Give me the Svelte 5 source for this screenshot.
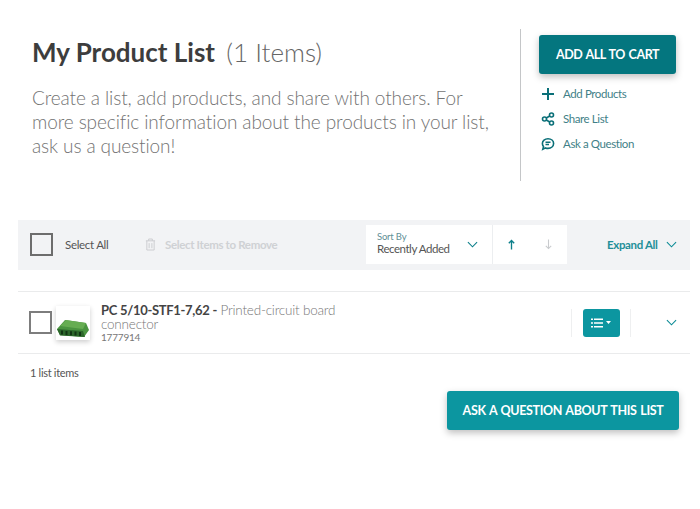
<script>
	let items = [{ code: "PC 5/10-STF1-7,62", name: "Printed-circuit board connector", sku: "1777914" }];
</script>

<div class="page">
	<header class="top">
		<div class="intro">
			<h1>My Product List <span>(1 Items)</span></h1>
			<p>Create a list, add products, and share with others. For more specific information about the products in your list, ask us a question!</p>
		</div>
		<aside class="actions">
			<button class="btn dark">ADD ALL TO CART</button>
			<ul>
				<li>
					<svg viewBox="0 0 14 14" width="14" height="14"><path d="M7 1v12M1 7h12" stroke="#0a6f78" stroke-width="2" fill="none"/></svg>
					Add Products
				</li>
				<li>
					<svg viewBox="0 0 14 14" width="14" height="14" fill="none" stroke="#0a6f78" stroke-width="1.6"><circle cx="3.5" cy="7" r="2"/><circle cx="10.500" cy="3" r="2"/><circle cx="10.500" cy="11" r="2"/><path d="M5.200 6l3.600-2M5.200 8l3.600 2"/></svg>
					Share List
				</li>
				<li>
					<svg viewBox="0 0 14 14" width="14" height="14" fill="none" stroke="#0a6f78" stroke-width="1.600"><path d="M7 1.800c3.200 0 5.600 2.100 5.600 4.800S10.200 11.400 7 11.400c-.9 0-1.700-.2-2.400-.5L1.800 12.300l.7-2.700C1.800 8.800 1.400 7.800 1.400 6.600 1.400 3.900 3.800 1.800 7 1.800z"/><path d="M4.500 5.300h5M4.500 7.500h3.500"/></svg>
					Ask a Question
				</li>
			</ul>
		</aside>
	</header>

	<section class="toolbar">
		<span class="check"></span>
		<span class="select-all">Select All</span>
		<span class="remove">
			<svg viewBox="0 0 12 14" width="11" height="13" fill="none" stroke="#c9cbce" stroke-width="1"><path d="M1 3h10M4 3V1h4v2M2 3v10h8V3M4.500 5.500v5.500M7.500 5.500v5.500"/></svg>
			Select Items to Remove
		</span>
		<div class="sort">
			<div class="sort-select">
				<div>
					<small>Sort By</small>
					<span>Recently Added</span>
				</div>
				<svg viewBox="0 0 12 7" width="11" height="7" fill="none" stroke="#0c7f8a" stroke-width="1.200"><path d="M1 1l5 5 5-5"/></svg>
			</div>
			<div class="arrow">
				<svg viewBox="0 0 10 12" width="9" height="11" fill="none" stroke="#0c7f8a" stroke-width="1.500"><path d="M5 11.500V1.500M2 4.500l3-3 3 3"/></svg>
			</div>
			<div class="arrow off">
				<svg viewBox="0 0 10 12" width="9" height="11" fill="none" stroke="#c9cbce" stroke-width="1.200"><path d="M5 .5v10M2 7.500l3 3 3-3"/></svg>
			</div>
		</div>
		<span class="expand">
			Expand All
			<svg viewBox="0 0 12 7" width="11" height="7" fill="none" stroke="#0c8b96" stroke-width="1.200"><path d="M1 1l5 5 5-5"/></svg>
		</span>
	</section>

	{#each items as item}
		<article class="row">
			<span class="check small"></span>
			<div class="thumb">
				<svg viewBox="0 0 34 34" width="34" height="34">
					<path d="M1 23 L9 14 L30 17 L33 24 L28 31 L4 29 Z" fill="#4a9440"/>
					<path d="M4 20 L10 14 L30 17 L27 23 Z" fill="#66ad52"/>
					<path d="M1 23 L27 25 L29 31 L4 29.500 Z" fill="#2c672b"/>
					<path d="M6 24.500v4M10.500 25v4M15 25.300v4M19.500 25.600v4M24 26v4" stroke="#123614" stroke-width="2"/>
				</svg>
			</div>
			<div class="info">
				<div class="desc"><b>{item.code} -</b> {item.name}</div>
				<div class="sku">{item.sku}</div>
			</div>
			<div class="menu-cell">
				<button class="menu" aria-label="Menu">
					<svg viewBox="0 0 20 10" width="20" height="10" fill="#fff"><path d="M0 .5h2v1.500H0zM3 .5h9v1.500H3zM0 4.200h2v1.500H0zM3 4.200h9v1.500H3zM0 8h2v1.500H0zM3 8h9v1.500H3zM15 3h5l-2.500 3z"/></svg>
				</button>
			</div>
			<svg class="row-chev" viewBox="0 0 12 7" width="11" height="7" fill="none" stroke="#0c8b96" stroke-width="1.200"><path d="M1 1l5 5 5-5"/></svg>
		</article>
	{/each}

	<div class="count">{items.length} list items</div>
	<div class="bottom">
		<button class="btn teal">ASK A QUESTION ABOUT THIS LIST</button>
	</div>
</div>

<style>
	:global(body) {
		margin: 0;
		background: #fff;
	}
	.page {
		width: 700px;
		height: 509px;
		overflow: hidden;
		font-family: Lato, "Noto Sans", sans-serif;
		color: #444;
		box-sizing: border-box;
		padding-top: 29px;
	}
	.top {
		display: flex;
		height: 152px;
		padding-left: 32px;
	}
	.intro {
		width: 489px;
		box-sizing: border-box;
		border-right: 1px solid #c4c6c8;
		padding-right: 20px;
	}
	h1 {
		margin: 5px 0 0;
		font-size: 26px;
		line-height: 36px;
		font-weight: 700;
		color: #3d3d3d;
	}
	h1 span {
		font-weight: 300;
		color: #666;
		margin-left: 5px;
	}
	p {
		margin: 16px 0 0;
		font-size: 19px;
		line-height: 24px;
		font-weight: 300;
		color: #737373;
		letter-spacing: -0.1px;
	}
	.actions {
		padding: 6px 0 0 18px;
	}
	.btn {
		border: 0;
		border-radius: 3px;
		color: #fff;
		font-family: inherit;
		font-weight: 700;
		font-size: 12.5px;
		word-spacing: 1px;
		box-shadow: 0 3px 7px rgba(0, 0, 0, 0.25);
		padding: 0;
	}
	.dark {
		width: 137px;
		height: 39px;
		background: #04767f;
		letter-spacing: -0.45px;
	}
	ul {
		list-style: none;
		margin: 7px 0 0;
		padding: 0 0 0 2px;
	}
	li {
		display: flex;
		align-items: center;
		gap: 8px;
		height: 25px;
		font-size: 11.5px;
		color: #3f7f87;
		letter-spacing: -0.4px;
	}
	.toolbar {
		display: flex;
		align-items: center;
		height: 50px;
		box-sizing: border-box;
		margin: 39px 10px 0 18px;
		background: #f2f3f5;
		padding: 0 0 1px 12px;
		font-size: 11.5px;
	}
	.check {
		width: 19px;
		height: 19px;
		flex: none;
		border: 2px solid #6d6d6d;
		display: block;
	}
	.select-all {
		margin-left: 12px;
		width: 80px;
		color: #555;
		letter-spacing: -0.3px;
	}
	.remove {
		display: flex;
		align-items: center;
		gap: 9px;
		width: 221px;
		font-weight: 700;
		color: #cfd1d4;
		letter-spacing: -0.35px;
	}
	.sort {
		display: flex;
		width: 201px;
		height: 39px;
		background: #fff;
	}
	.sort-select {
		display: flex;
		align-items: center;
		justify-content: space-between;
		width: 127px;
		box-sizing: border-box;
		padding: 0 14px 3px 11px;
		border-right: 1px solid #eceef0;
	}
	.sort-select small {
		display: block;
		font-size: 9.5px;
		line-height: 11px;
		color: #5f8f96;
		letter-spacing: -0.2px;
	}
	.sort-select span {
		display: block;
		font-size: 11.5px;
		line-height: 14px;
		color: #555;
		letter-spacing: -0.45px;
	}
	.sort-select svg {
		margin-top: 3px;
	}
	.arrow {
		flex: 1;
		display: flex;
		align-items: center;
		justify-content: center;
	}
	.expand {
		margin-left: 40px;
		display: flex;
		align-items: center;
		gap: 8px;
		font-weight: 700;
		color: #1f8f99;
		letter-spacing: -0.35px;
	}
	.row {
		display: flex;
		align-items: center;
		height: 61px;
		margin: 21px 10px 0 18px;
		border-top: 1px solid #eaebec;
		border-bottom: 1px solid #eaebec;
		padding-left: 11px;
	}
	.small {
		width: 19px;
		height: 19px;
		border-color: #7d7d7d;
	}
	.thumb {
		width: 34px;
		height: 34px;
		margin-left: 4px;
		background: #fff;
		box-shadow: 0 2px 5px rgba(0, 0, 0, 0.2);
		flex: none;
	}
	.info {
		width: 248px;
		margin-left: 11px;
	}
	.desc {
		font-size: 13.5px;
		line-height: 14px;
		font-weight: 300;
		color: #777;
		letter-spacing: -0.2px;
	}
	.desc b {
		font-weight: 700;
		font-size: 13px;
		color: #444;
		letter-spacing: -0.3px;
	}
	.sku {
		font-size: 10px;
		line-height: 12px;
		color: #777;
		letter-spacing: -0.2px;
	}
	.menu-cell {
		margin-left: 222px;
		width: 60px;
		height: 28px;
		box-sizing: border-box;
		border-left: 1px solid #eeeff0;
		border-right: 1px solid #eeeff0;
		display: flex;
		justify-content: center;
	}
	.menu {
		width: 37px;
		height: 28px;
		border: 0;
		border-radius: 3px;
		background: #0c96a0;
		padding: 0;
		display: flex;
		align-items: center;
		justify-content: center;
	}
	.row-chev {
		margin-left: 35px;
	}
	.count {
		margin: 12px 0 0 30px;
		font-size: 11px;
		line-height: 14px;
		color: #555;
		letter-spacing: -0.3px;
	}
	.bottom {
		display: flex;
		justify-content: flex-end;
		padding-right: 21px;
		margin-top: 11px;
	}
	.teal {
		width: 232px;
		height: 39px;
		background: #0c96a0;
		letter-spacing: -0.35px;
	}
</style>
